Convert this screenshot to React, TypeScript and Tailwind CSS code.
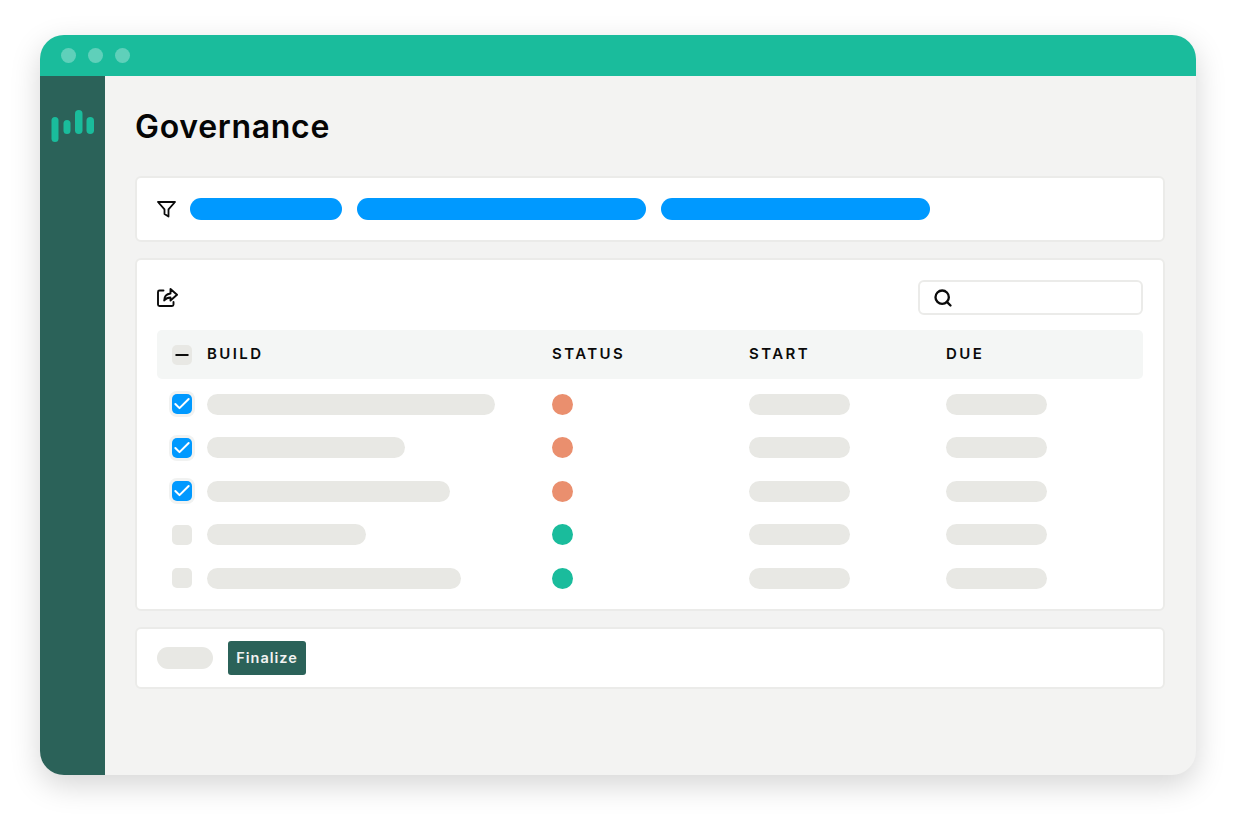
import React from 'react';
import { Check, Minus, Search } from 'lucide-react';

const rows = [
  { width: 'w-[288px]', checked: true, dot: 'bg-[#ea8f6e]' },
  { width: 'w-[198px]', checked: true, dot: 'bg-[#ea8f6e]' },
  { width: 'w-[243px]', checked: true, dot: 'bg-[#ea8f6e]' },
  { width: 'w-[159px]', checked: false, dot: 'bg-[#1abc9c]' },
  { width: 'w-[254px]', checked: false, dot: 'bg-[#1abc9c]' },
];

const gridCols = 'grid grid-cols-[35px_345px_197px_197px_1fr] items-center pl-[15px]';

const Logo = () => (
  <svg width="44" height="34" viewBox="0 0 44 34" fill="#1abc9c">
    <rect x="0.500" y="7" width="7" height="25" rx="3.5" />
    <rect x="12.500" y="10" width="7" height="14" rx="3.5" />
    <rect x="24" y="0" width="7.5" height="24" rx="3.75" />
    <rect x="35.500" y="7" width="7.5" height="17" rx="3.75" />
  </svg>
);

const FilterIcon = () => (
  <svg width="19" height="17" viewBox="0 0 19 17" fill="none" stroke="#0b0b0b" strokeWidth="1.8" strokeLinejoin="round">
    <path d="M1 1h17l-6.500 7.400v7.200l-4-2.600V8.400z" />
  </svg>
);

const ShareIcon = () => (
  <svg width="21" height="19" viewBox="0 0 21 19" fill="none" stroke="#0b0b0b" strokeWidth="1.9" strokeLinecap="round" strokeLinejoin="round">
    <path d="M6.500 2.500H2.500a1.500 1.500 0 0 0-1.500 1.500v12.500a1.500 1.500 0 0 0 1.500 1.500h12.500a1.500 1.500 0 0 0 1.500-1.500v-2.500" />
    <path d="M13.500 1l6.500 5.800-6.500 5.700V9.500c-2.800 0-4.700 1-6.300 3 0-4 2.300-6.500 6.300-7z" />
  </svg>
);

const Checkbox = ({ checked }: { checked: boolean }) =>
  checked ? (
    <div className="flex h-5 w-5 items-center justify-center rounded-[5px] bg-[#0099ff] ring-[3px] ring-[#f1f2f1]">
      <Check size={20} color="#ffffff" strokeWidth={2.4} />
    </div>
  ) : (
    <div className="h-5 w-5 rounded-[5px] bg-[#e8e8e4]" />
  );

const Card = ({ className, children }: { className: string; children: React.ReactNode }) => (
  <div className={`rounded-[6px] border-2 border-[#ebebe9] bg-white ${className}`}>{children}</div>
);

export default function App() {
  return (
    <div className="h-[819px] w-[1234px] overflow-hidden bg-white pl-[40px] pt-[35px] font-['Inter',sans-serif]">
      <div className="flex h-[740px] w-[1156px] flex-col overflow-hidden rounded-[24px] bg-[#f3f3f2] shadow-[0_10px_30px_rgba(0,0,0,0.17)]">
        <div className="flex h-[41px] shrink-0 items-center gap-[12px] bg-[#1abc9c] pl-[21px]">
          <span className="h-[15px] w-[15px] rounded-full bg-[#5fd0ba]" />
          <span className="h-[15px] w-[15px] rounded-full bg-[#5fd0ba]" />
          <span className="h-[15px] w-[15px] rounded-full bg-[#5fd0ba]" />
        </div>

        <div className="flex flex-1">
          <div className="w-[65px] shrink-0 bg-[#2b6259] pl-[11px] pt-[34px]">
            <Logo />
          </div>

          <div className="flex-1 pl-[30px] pr-[31px]">
            <h1 className="mt-[31px] h-[40px] text-[32px] font-semibold leading-[40px] tracking-[0.7px] text-[#050505]">Governance</h1>

            <Card className="mt-[29px] flex h-[66px] items-center pl-[20px]">
              <FilterIcon />
              <span className="ml-[14px] h-[22px] w-[152px] rounded-full bg-[#0099ff]" />
              <span className="ml-[15px] h-[22px] w-[289px] rounded-full bg-[#0099ff]" />
              <span className="ml-[15px] h-[22px] w-[269px] rounded-full bg-[#0099ff]" />
            </Card>

            <Card className="mt-[16px] h-[353px] px-[20px] pt-[20px]">
              <div className="flex h-[35px] items-center justify-between">
                <ShareIcon />
                <div className="flex h-[35px] w-[225px] items-center rounded-[6px] border-2 border-[#ebebe9] pl-[13px]">
                  <Search size={20} color="#0b0b0b" strokeWidth={2.8} />
                </div>
              </div>

              <div className={`${gridCols} mt-[15px] h-[49px] rounded-[5px] bg-[#f4f6f5] text-[15px] font-semibold tracking-[2.400px] text-[#0b0b0b]`}>
                <div className="flex h-5 w-5 items-center justify-center rounded-[5px] bg-[#e8e8e4]">
                  <Minus size={20} color="#0b0b0b" strokeWidth={2.2} />
                </div>
                <span>BUILD</span>
                <span>STATUS</span>
                <span>START</span>
                <span>DUE</span>
              </div>

              <div className="mt-[3.500px]">
                {rows.map((row, i) => (
                  <div key={i} className={`${gridCols} h-[43.5px]`}>
                    <Checkbox checked={row.checked} />
                    <span className={`h-[21px] rounded-full bg-[#e8e8e4] ${row.width}`} />
                    <span className={`h-[21px] w-[21px] rounded-full ${row.dot}`} />
                    <span className="h-[21px] w-[101px] rounded-full bg-[#e8e8e4]" />
                    <span className="h-[21px] w-[101px] rounded-full bg-[#e8e8e4]" />
                  </div>
                ))}
              </div>
            </Card>

            <Card className="mt-[16px] flex h-[62px] items-center pl-[20px]">
              <span className="h-[22px] w-[56px] rounded-full bg-[#e8e8e4]" />
              <button className="ml-[15px] h-[34px] w-[78px] rounded-[3px] bg-[#2b6259] text-[14.500px] font-semibold tracking-[1px] text-[#f3f3f2]">
                Finalize
              </button>
            </Card>
          </div>
        </div>
      </div>
    </div>
  );
}
